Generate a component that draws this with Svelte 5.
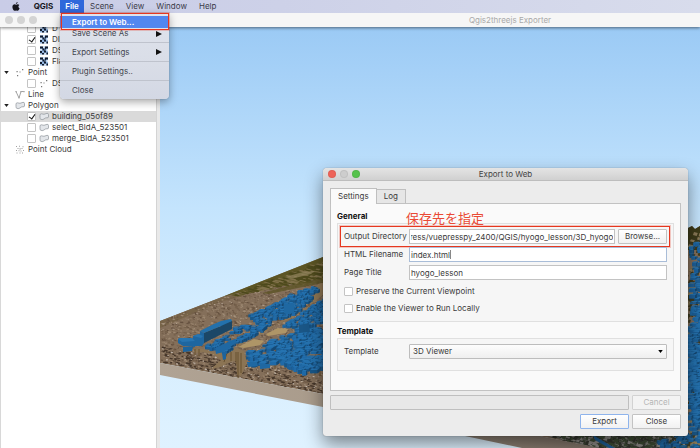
<script>
  const menus = ['Scene', 'View', 'Window', 'Help'];
  const fileMenu = [
    { label: 'Save Scene As', sub: true },
    { label: 'Export Settings', sub: true },
    { label: 'Plugin Settings..', sub: false },
    { label: 'Close', sub: false }
  ];
  const layers = [
    { icon: 'dem', label: 'D', child: true, checked: false },
    { icon: 'dem', label: 'DI', child: true, checked: true },
    { icon: 'dem', label: 'DS', child: true, checked: false },
    { icon: 'dem', label: 'Fla', child: true, checked: false },
    { icon: 'point', label: 'Point', open: true },
    { icon: 'point', label: 'DS', child: true, checked: false },
    { icon: 'line', label: 'Line' },
    { icon: 'polygon', label: 'Polygon', open: true },
    { icon: 'polygon', label: 'building_05of89', child: true, checked: true, selected: true },
    { icon: 'polygon', label: 'select_BldA_523501', child: true, checked: false },
    { icon: 'polygon', label: 'merge_BldA_523501', child: true, checked: false },
    { icon: 'cloud', label: 'Point Cloud' }
  ];

  let directory = $state('/vuepress/vuepresspy_2400/QGIS/hyogo_lesson/3D_hyogo');
  let filename = $state('index.html');
  let title = $state('hyogo_lesson');

  function showEnd(node) {
    node.scrollLeft = node.scrollWidth;
  }

  // Seeded generator, so that the terrain is the same on every load.
  let seed = 41;
  function rnd() {
    seed = (seed * 16807) % 2147483647;
    return seed / 2147483647;
  }
  function inside(x, y, poly) {
    let hit = false;
    for (let i = 0, j = poly.length - 1; i < poly.length; j = i++) {
      const [xi, yi] = poly[i];
      const [xj, yj] = poly[j];
      if (yi > y !== yj > y && x < ((xj - xi) * (y - yi)) / (yj - yi) + xi) hit = !hit;
    }
    return hit;
  }
  function scatter(poly, count) {
    const xs = poly.map((p) => p[0]);
    const ys = poly.map((p) => p[1]);
    const x0 = Math.min(...xs), x1 = Math.max(...xs);
    const y0 = Math.min(...ys), y1 = Math.max(...ys);
    const out = [];
    while (out.length < count) {
      const x = x0 + rnd() * (x1 - x0);
      const y = y0 + rnd() * (y1 - y0);
      if (inside(x, y, poly)) out.push([x, y]);
    }
    return out;
  }
  function specks(poly, count, w, h) {
    return scatter(poly, count)
      .map(([x, y]) => {
        const a = (0.4 + rnd()) * w;
        const b = (0.4 + rnd()) * h;
        return `M${x.toFixed(1)} ${y.toFixed(1)}l${a.toFixed(1)} ${(a * 0.25).toFixed(1)}l${(-a * 0.3).toFixed(1)} ${b.toFixed(1)}l${(-a).toFixed(1)} ${(-a * 0.25).toFixed(1)}z`;
      })
      .join('');
  }
  const town = [[161, 321], [222, 297], [323, 274], [323, 393], [161, 362]];
  const front = [[161, 345], [220, 355], [323, 378], [323, 393], [161, 362]];
  const hill = [[228, 296], [323, 259], [323, 278], [270, 286]];
  const south = [[543, 434], [700, 434], [700, 448], [604, 448]];
  const east = [[686, 230], [700, 230], [700, 448], [686, 448]];
  const ground = [
    { fill: '#634f3e', d: specks(town, 800, 2.2, 0.9) },
    { fill: '#75604b', d: specks(town, 700, 2.4, 1) },
    { fill: '#9c8770', d: specks(town, 700, 2, 0.9) },
    { fill: '#b5a593', d: specks(town, 240, 1.6, 0.7) },
    { fill: '#45362a', d: specks(front, 260, 2.6, 1) },
    { fill: '#cfc6bd', d: specks(front, 60, 1.6, 0.8) },
    { fill: '#5f5829', d: specks(hill, 160, 7, 1) },
    { fill: '#4d491c', d: specks(hill, 120, 7, 1) },
    { fill: '#80714a', d: specks(hill, 50, 6, 0.8) },
    { fill: '#33362d', d: specks(south, 220, 4, 2) },
    { fill: '#8d8b86', d: specks(south, 120, 3, 2) },
    { fill: '#3e4c34', d: specks(south, 90, 4, 2) },
    { fill: '#3f3b20', d: specks(east, 140, 4, 3) },
    { fill: '#8b7a58', d: specks(east, 50, 4, 3) }
  ];

  const districts = [
    { poly: [[247, 315], [270, 305], [290, 293], [313, 286], [315, 293], [300, 307], [290, 314], [268, 322], [260, 332], [255, 329], [255, 321]], n: 260, s: 5 },
    { poly: [[282, 325], [303, 310], [323, 298], [323, 321], [307, 325], [287, 327]], n: 190, s: 4 },
    { poly: [[262, 340], [290, 333], [300, 324], [310, 323], [323, 330], [323, 365], [307, 373], [285, 366], [265, 362], [262, 348]], n: 300, s: 7 },
    { poly: [[244, 351], [261, 349], [264, 364], [248, 363]], n: 34, s: 7 },
    { poly: [[227, 330], [238, 325], [250, 325], [252, 329], [228, 333]], n: 26, s: 5 },
    { poly: [[215, 348], [235, 338], [252, 330], [256, 332], [235, 342], [222, 352]], n: 70, s: 5 },
    { poly: [[203, 348], [206, 344], [225, 335], [227, 338], [212, 348]], n: 34, s: 5 },
    { poly: [[688, 240], [700, 236], [700, 300], [688, 320]], n: 50, s: 6 },
    { poly: [[686, 320], [700, 300], [700, 425], [686, 430]], n: 230, s: 7 },
    { poly: [[655, 439], [700, 430], [700, 448], [660, 446]], n: 30, s: 6 }
  ];
  const fronts = ['#1c619c', '#1f6aa8', '#195788', '#1d6099'];
  const buildings = districts
    .flatMap(({ poly, n, s }) =>
      scatter(poly, n).map(([x, y]) => {
        const w = s * (0.45 + rnd() * 0.6);
        const h = s * (0.3 + rnd() * 0.4);
        return { x, y, w, h, d: w * 0.35, fill: fronts[Math.floor(rnd() * 4)] };
      })
    )
    .sort((a, b) => a.y - b.y);
</script>

{#snippet layerIcon(kind)}
  <svg class="glyph" viewBox="0 0 10 9" aria-hidden="true">
    {#if kind === 'dem'}
      <rect x="1" y="0.5" width="8" height="8" fill="#8fb3de" />
      <path d="M1 .5h3v2H1zM6 .5h3v2H7v1H6zM3.500 2.500h2v2h-2zM1 5h2v2H1zM5 4.500h2v2H5zM3 7h2v1.500H3zM7.500 6.500H9v2H7.500z" fill="#111a2c" />
      <path d="M4 .5h1.500v1.500H4zM7.500 3H9v2H7.500zM1 3h2v1.500H1zM5.500 7h1.500v1.500H5.500z" fill="#dbe8f6" />
    {:else if kind === 'point'}
      <path d="M1.500 3h1.200v1.200H1.500zM4.500 3.500h1v1h-1zM7 1h1.300v1.200H7zM2 7h1.200v1.200H2z" fill="#777" />
    {:else if kind === 'line'}
      <path d="M1 1.500l3 6.500 2-6.500h3" fill="none" stroke="#8a8a8a" stroke-width="0.8" />
      <path d="M.4 1h1.400v1.200H.4zM3.300 7.300h1.400v1.200H3.300zM5.300 1h1.400v1.200H5.300zM8.300 1h1.400v1.200H8.300z" fill="#aaa" />
    {:else if kind === 'polygon'}
      <path d="M1 3.200Q1 1.800 2.300 1.800L5 2.300 8 1.300Q9.500 1.200 9.500 2.600V5Q9.400 6 8 5.800 6.600 5.600 6 6.300 3.800 8.300 2 7.400 .7 7 1 5.500z" fill="#e3e6ea" stroke="#8e9399" stroke-width="0.7" />
    {:else}
      <path d="M1 1h1v1H1zM4 .8h1v1H4zM7.500 1.200h1v1h-1zM2.500 3h1v1h-1zM4.500 3.200h1.200v1.200H4.500zM6.500 3h1v1h-1zM1 5h1v1H1zM3.500 5.200h1v1h-1zM5.500 5.500h1v1h-1zM8 5h1v1H8zM1.500 7.500h1v1h-1zM4.500 7.500h1v1h-1zM7 7.500h1v1H7z" fill="#a0a0a0" />
    {/if}
  </svg>
{/snippet}

<div class="desktop">
  <nav class="menubar" aria-label="Menu bar">
    <button class="apple" aria-label="Apple menu">
      <svg viewBox="0 0 14 16" aria-hidden="true">
        <path d="M9.900 0c.1 1.700-1.400 3.400-3.100 3.400C6.700 1.700 8.200.2 9.900 0zM12.900 5.500c-1 .6-1.600 1.500-1.600 2.700 0 1.400.8 2.500 2.100 3-.5 1.600-1.800 4.400-3.500 4.400-.9 0-1.500-.6-2.600-.6s-1.700.6-2.600.6C2.700 15.600.6 11.900.6 8.800c0-2.900 1.800-4.700 3.900-4.700 1.100 0 2 .8 2.700.8.800 0 1.700-.8 3-.8 1.100 0 2.100.5 2.700 1.400z" />
      </svg>
    </button>
    <button class="app">QGIS</button>
    <div class="file">
      <button class="current" aria-expanded="true">File</button>
      <div class="dropdown">
        <button class="item active">Export to Web...</button>
        {#each fileMenu as entry}
          <button class="item">
            <span>{entry.label}</span>
            {#if entry.sub}
              <svg viewBox="0 0 6 6" aria-hidden="true"><path d="M0 0l6 3-6 3z" /></svg>
            {/if}
          </button>
        {/each}
        <div class="mark menu-mark"></div>
      </div>
    </div>
    {#each menus as name}
      <button>{name}</button>
    {/each}
  </nav>

  <header class="titlebar">
    <div class="lights"><i></i><i></i><i></i></div>
    <h1>Qgis2threejs Exporter</h1>
  </header>

  <main>
    <aside>
      <ul>
        {#each layers as layer}
          <li class:child={layer.child} class:selected={layer.selected}>
            {#if layer.child}
              <label>
                <input type="checkbox" checked={layer.checked} />
                {@render layerIcon(layer.icon)}
                <span>{layer.label}</span>
              </label>
            {:else}
              <span class="twist">
                {#if layer.open}
                  <svg viewBox="0 0 6 4" aria-hidden="true"><path d="M0 0h6L3 4z" /></svg>
                {/if}
              </span>
              {@render layerIcon(layer.icon)}
              <span>{layer.label}</span>
            {/if}
          </li>
        {/each}
      </ul>
    </aside>
    <div class="splitter"></div>
    <section class="view" aria-label="3D view">
      <svg viewBox="160 27 540 421" preserveAspectRatio="xMinYMin slice" aria-hidden="true">
        <defs>
          <linearGradient id="slab" x1="0" x2="1">
            <stop offset="0" stop-color="#b0a394" />
            <stop offset="0.4" stop-color="#a99b8b" />
            <stop offset="1" stop-color="#7c7065" />
          </linearGradient>
        </defs>
        <path d="M160 321L222 297 323 257 600 190 688 228 692 226 695 229 700 226V448H600L323 394 160 363z" fill="#846f5a" />
        <path d="M222 297L323 257V277L290 282 262 287z" fill="#5c5524" />
        <path d="M160 321L222 297 262 290 220 302 160 328z" fill="#776449" />
        <path d="M688 228l4-2 3 3 5-3v24h-12z" fill="#3d3a18" />
        <path d="M540 434h160v14H596z" fill="#5d5f58" />
        {#each ground as layer}
          <path d={layer.d} fill={layer.fill} />
        {/each}
        <path d="M262 293l30-8 31-7v5l-30 6-24 5z" fill="#5c5426" opacity="0.8" />
        <path d="M285 277l18-5 12-1-4 3-20 5z" fill="#94865f" opacity="0.7" />
        <path d="M236 348l20-12 14-9 22-9 16-10 7-14v-5l3-5 5-1v12l-21 16-24 12-14 10-24 10z" fill="#8f7754" />
        <path d="M266 334l12-6 10 1-2 4-18 3zM238 347l16-8 10 2-4 4-16 3z" fill="#ae9567" />
        <path d="M193 348l10 1 12 4 10-2 12-3 7 3 3 12-6 13-4-1-1-14-6 1-10 5-9 2 10-9-6-5-12-3-8 1z" fill="#8b7454" />
        <path d="M195 349v6M199 349v7M227 353l-3 9M231 352v9M236 352v12M238 352v26M241 353v20M288 363v6M292 366v5M300 370v5M315 366v9M320 364v12M275 361v8" stroke="#66502f" stroke-width="1" />
        <path d="M160 363L323 394 545 437 600 448H522L465 436 323 407 160 375z" fill="url(#slab)" />
        {#each buildings as b}
          <g>
            <path d="M{b.x} {b.y}h{b.w}v{b.h}h{-b.w}z" fill={b.fill} />
            <path d="M{b.x} {b.y}l{b.d} {-b.d * 0.6}h{b.w}l{-b.d} {b.d * 0.6}z" fill="#2673b0" />
            <path d="M{b.x + b.w} {b.y}l{b.d} {-b.d * 0.6}v{b.h}l{-b.d} {b.d * 0.6}z" fill="#164a75" />
          </g>
        {/each}
        <path d="M204 333l17-7v-3l11-2v8l-28 14z" fill="#1b4767" />
        <path d="M200 331l14-7 7-3 10-2 1 2-11 5-17 7z" fill="#2371ac" />
        <path d="M193 336l7-2v-3l4 2v10l-2 3h-9z" fill="#1e66a0" />
        <path d="M178 339l2-1h12l3 3v6l-12-1-5-3z" fill="#1e66a0" />
        <path d="M178 339l2-1h12l3 3-13 1zM193 336l5-2 5 2-2 2z" fill="#2875b0" />
        <path d="M183 347h10l-1 4-9 1zM222 353l4-2v8l-3 1z" fill="#1d649d" />
        <path d="M215 348l20-9 2 3-14 10-7 2z" fill="#1f68a3" />
        <path d="M284 304l8-1 2 1v9l-8 1-2-1zM247 362h10l1 4-10 1zM260 364h10v4l-10 1z" fill="#1f68a2" />
        <path d="M299 325l10-2 1 9-11 1z" fill="#1a5686" />
        <path d="M593 435l10 6 12 7h-6l-14-8z" fill="#1d5d93" />
      </svg>
    </section>
  </main>

  <form class="dialog" aria-label="Export to Web" onsubmit={(e) => e.preventDefault()}>
    <header>
      <div class="lights"><i class="red"></i><i></i><i class="green"></i></div>
      <h2>Export to Web</h2>
    </header>
    <div class="content">
      <div class="tabs">
        <button type="button" class="tab on">Settings</button>
        <button type="button" class="tab">Log</button>
      </div>
      <div class="pane">
        <div class="heading">
          <h3>General</h3>
          <span class="note">保存先を指定</span>
        </div>
        <div class="group general">
          <div class="row">
            <label for="dir">Output Directory</label>
            <input id="dir" type="text" bind:value={directory} use:showEnd />
            <button type="button" class="push">Browse...</button>
            <div class="mark row-mark"></div>
          </div>
          <div class="row">
            <label for="file">HTML Filename</label>
            <input id="file" class="focus" type="text" bind:value={filename} />
            <i class="caret"></i>
          </div>
          <div class="row">
            <label for="title">Page Title</label>
            <input id="title" type="text" bind:value={title} />
          </div>
          <label class="check"><input type="checkbox" />Preserve the Current Viewpoint</label>
          <label class="check"><input type="checkbox" />Enable the Viewer to Run Locally</label>
        </div>
        <div class="heading">
          <h3>Template</h3>
        </div>
        <div class="group">
          <div class="row">
            <label for="template">Template</label>
            <div class="combo">
              <select id="template"><option>3D Viewer</option></select>
              <svg viewBox="0 0 6 4" aria-hidden="true"><path d="M0 0h6L3 4z" /></svg>
            </div>
          </div>
        </div>
      </div>
      <div class="foot">
        <div class="progress" role="progressbar" aria-label="Export progress"></div>
        <button type="button" class="push" disabled>Cancel</button>
      </div>
      <div class="foot">
        <button type="submit" class="push default">Export</button>
        <button type="button" class="push">Close</button>
      </div>
    </div>
  </form>
</div>

<style>
  :global(body) {
    margin: 0;
  }
  .desktop,
  .desktop * {
    box-sizing: border-box;
  }
  .desktop {
    position: relative;
    display: flex;
    flex-direction: column;
    height: 100vh;
    overflow: hidden;
    font: 8px/11px Inter, 'Noto Sans CJK JP', sans-serif;
    color: #3a3a3a;
  }
  button,
  input,
  select {
    font: inherit;
    color: inherit;
    margin: 0;
    padding: 0;
    border: 0;
    background: none;
    appearance: none;
    outline: none;
  }
  h1,
  h2,
  h3 {
    margin: 0;
    font-size: inherit;
    font-weight: 400;
  }
  svg {
    display: block;
  }

  .menubar {
    position: relative;
    z-index: 3;
    display: flex;
    height: 13px;
    padding-left: 6px;
    background: linear-gradient(90deg, #c9cce7, #cdd1e8 40%, #d8dcec);
    color: #3b3c48;
  }
  .menubar > button {
    padding: 0 6px;
  }
  .menubar .apple {
    width: 21px;
  }
  .apple svg {
    width: 8px;
    height: 9px;
    fill: #15151c;
  }
  .menubar .app {
    width: 33px;
    font-weight: 700;
    color: #16161c;
  }
  .file {
    position: relative;
  }
  .current {
    width: 24px;
    height: 13px;
    background: #2f68db;
    color: #fff;
    font-weight: 600;
  }
  .dropdown {
    position: absolute;
    top: 13px;
    left: 0;
    width: 109px;
    padding-top: 3px;
    border-radius: 0 0 4px 4px;
    background: linear-gradient(#dfe3ec, #d9dde7 60%, #d3d8e4);
    box-shadow: 0 3px 9px rgba(0, 0, 0, 0.35), 0 0 1px rgba(0, 0, 0, 0.4);
  }
  .item {
    display: flex;
    align-items: center;
    justify-content: space-between;
    width: 100%;
    height: 19px;
    padding: 0 7px 0 12px;
    border-top: 1px solid #bfc3cd;
    color: #43464f;
  }
  .item svg {
    width: 6px;
    height: 6px;
    fill: #111;
  }
  .item.active {
    height: 12px;
    border: 0;
    background: #5287ef;
    color: #fff;
    font-weight: 600;
  }
  .item.active + .item {
    height: 14px;
    border: 0;
    padding-bottom: 3px;
  }
  .mark {
    position: absolute;
    border: 1px solid #e6371f;
    box-shadow: 0 0 0 1px rgba(230, 55, 31, 0.25);
    pointer-events: none;
  }
  .menu-mark {
    top: 0;
    left: 1px;
    right: 0;
    height: 17px;
  }

  .titlebar {
    position: relative;
    z-index: 1;
    display: flex;
    align-items: center;
    height: 14px;
    background: #f6f6f6;
    box-shadow: 0 1px 3px rgba(0, 0, 0, 0.5);
    color: #a9a9a9;
  }
  .titlebar h1,
  .dialog h2 {
    flex: 1;
    text-align: center;
  }
  .titlebar h1 {
    padding-left: 280px;
  }
  .lights {
    display: flex;
    gap: 4px;
    padding-left: 5px;
    width: 40px;
  }
  .lights i {
    width: 8px;
    height: 8px;
    border-radius: 50%;
    background: #d4d4d4;
  }
  .lights .red {
    background: #ee6358;
  }
  .lights .green {
    background: #56c24c;
  }

  main {
    flex: 1;
    display: flex;
    min-height: 0;
  }
  aside {
    width: 156px;
    overflow: hidden;
    border-left: 1px solid #d8d8d8;
    background: #fff;
  }
  ul {
    margin: -4px 0 0;
    padding: 0;
    list-style: none;
  }
  li,
  li label {
    display: flex;
    align-items: center;
    height: 11px;
    white-space: nowrap;
  }
  li.child {
    padding-left: 26px;
  }
  li.selected {
    background: #dadada;
  }
  .twist {
    width: 14px;
    padding-left: 3px;
  }
  .twist svg {
    width: 5px;
    height: 3px;
    fill: #222;
  }
  .glyph {
    width: 10px;
    height: 9px;
    margin-right: 3px;
  }
  input[type='checkbox'] {
    flex: none;
    width: 9px;
    height: 9px;
    border: 1px solid #c4c4c4;
    border-radius: 1px;
    background: #fff;
  }
  li input[type='checkbox'] {
    margin-right: 3px;
  }
  input[type='checkbox']:checked::before {
    content: '';
    display: block;
    width: 3px;
    height: 5px;
    margin: 0 2px;
    border: solid #111;
    border-width: 0 1px 1px 0;
    transform: rotate(35deg);
  }
  .splitter {
    width: 4px;
    background: #e9e9e9;
    border-left: 1px solid #d4d4d4;
  }
  .view {
    flex: 1;
    min-width: 0;
    background: linear-gradient(#9bcaf5, #c4e4fd 43%, #d3ecfe 65%, #dff2ff);
  }
  .view svg {
    width: 100%;
    height: 100%;
  }

  .dialog {
    position: absolute;
    z-index: 2;
    top: 168px;
    left: 323px;
    width: 365px;
    border-radius: 4px 4px 3px 3px;
    background: #ececec;
    box-shadow: 0 8px 18px rgba(0, 0, 0, 0.45), 0 0 1px rgba(0, 0, 0, 0.5);
  }
  .dialog header {
    display: flex;
    align-items: center;
    height: 13px;
    border-bottom: 1px solid #bdbdbd;
    border-radius: 4px 4px 0 0;
    background: linear-gradient(#e4e4e4, #d0d0d0);
    color: #444;
  }
  .dialog h2 {
    padding-right: 40px;
  }
  .dialog .lights i {
    box-shadow: inset 0 0 0 1px rgba(0, 0, 0, 0.06);
  }
  .dialog .lights i:not(.red, .green) {
    background: #cdcdcd;
  }
  .content {
    padding: 7px;
  }
  .tabs {
    display: flex;
    align-items: flex-end;
  }
  .tab {
    height: 14px;
    padding: 0 7px;
    border: 1px solid #bfbfbf;
    border-left: 0;
    border-bottom: 0;
    background: #e6e6e6;
  }
  .tab.on {
    position: relative;
    height: 16px;
    margin-bottom: -1px;
    border-left: 1px solid #bfbfbf;
    background: #fafafa;
  }
  .pane {
    height: 188px;
    padding: 7px 6px;
    border: 1px solid #c2c2c2;
    background: #fafafa;
  }
  .heading {
    position: relative;
    height: 12px;
  }
  h3 {
    font-weight: 700;
    color: #111;
  }
  .note {
    position: absolute;
    top: -1px;
    left: 69px;
    font-size: 13px;
    line-height: 16px;
    color: #ea4a35;
  }
  .group {
    padding: 5px 6px;
    border: 1px solid #e0e0e0;
    background: #f6f6f6;
  }
  .group.general {
    height: 99px;
    margin-bottom: 4px;
  }
  .group:not(.general) {
    height: 33px;
  }
  .row {
    position: relative;
    display: flex;
    align-items: center;
    gap: 3px;
    height: 15px;
    margin-bottom: 3px;
  }
  .row label {
    width: 62px;
    white-space: nowrap;
  }
  .row input {
    flex: 1;
    min-width: 0;
    height: 15px;
    padding: 0 1px;
    border: 1px solid #c3c3c3;
    background: #fff;
  }
  .row input.focus {
    border-color: #a9bdd8;
  }
  .row-mark {
    top: -3px;
    bottom: -3px;
    left: -4px;
    right: -3px;
  }
  .caret {
    position: absolute;
    top: 3px;
    left: 106px;
    width: 1px;
    height: 9px;
    background: #888;
  }
  .check {
    display: flex;
    align-items: center;
    gap: 3px;
    height: 17px;
  }
  .push {
    width: 49px;
    height: 15px;
    border: 1px solid #c3c3c3;
    border-radius: 1px;
    background: linear-gradient(#fff, #f1f1f1);
  }
  .push:disabled {
    color: #b5b5b5;
    background: #f3f3f3;
    border-color: #d2d2d2;
  }
  .push.default {
    border-color: #8fb4ec;
  }
  .combo {
    position: relative;
    flex: 1;
  }
  select {
    display: block;
    width: 100%;
    height: 15px;
    padding: 0 3px;
    border: 1px solid #bdbdbd;
    border-radius: 1px;
    background: linear-gradient(#fdfdfd, #efefef);
  }
  .combo svg {
    position: absolute;
    top: 6px;
    right: 4px;
    width: 5px;
    height: 3px;
  }
  .foot {
    display: flex;
    justify-content: flex-end;
    gap: 3px;
    margin-top: 4px;
  }
  .progress {
    flex: 1;
    border: 1px solid #bfbfbf;
    border-radius: 1px;
    background: #e8e8e8;
  }
</style>
